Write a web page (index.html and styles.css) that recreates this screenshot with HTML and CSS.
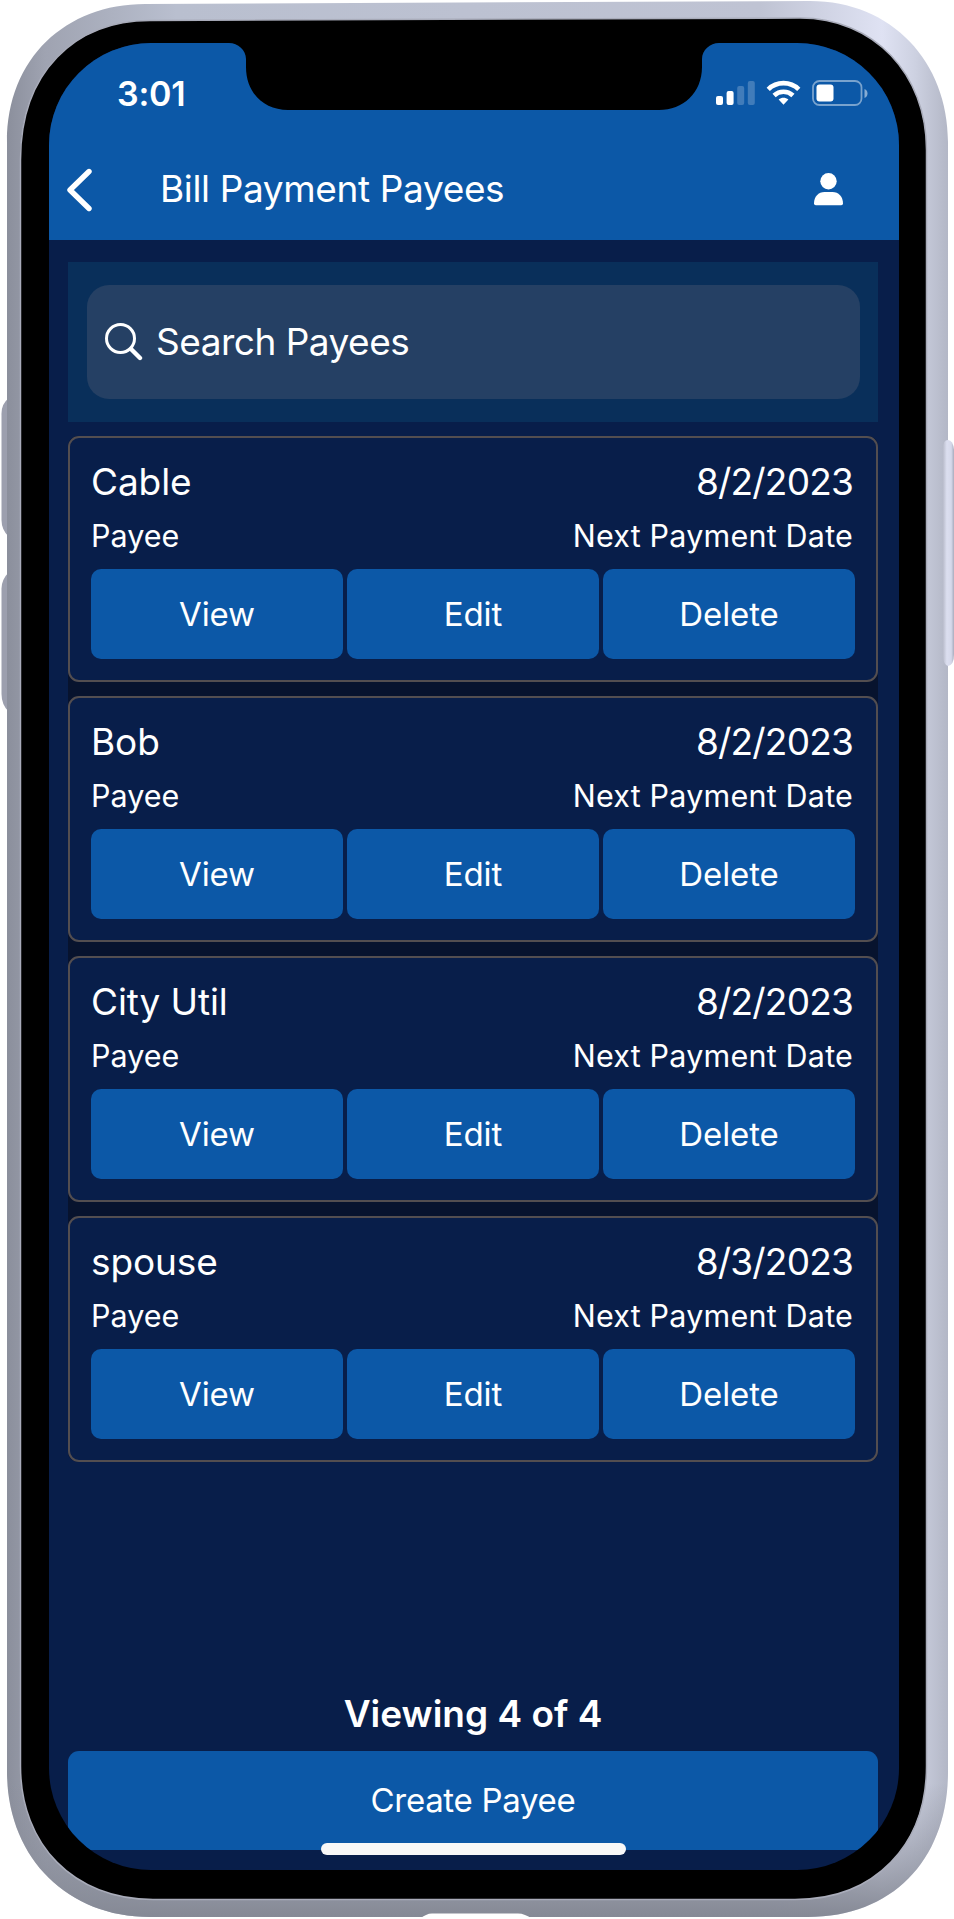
FILE: index.html
```
<!DOCTYPE html>
<html lang="en">

<head>
    <meta charset="UTF-8">
    <meta name="viewport" content="width=device-width, initial-scale=1.0">
    <link rel="stylesheet" href="styles.css">
    <title>Bill Payment Payees</title>
</head>

<body>
    <div class="phone">
        <!-- phone body -->
        <svg class="phoneFrame" viewBox="0 0 954 1919" aria-hidden="true">
            <defs>
                <linearGradient id="metal" x1="0" y1="0" x2="1" y2="0">
                    <stop offset="0" stop-color="#8b8f9c" />
                    <stop offset=".04" stop-color="#9fa3b1" />
                    <stop offset=".18" stop-color="#b9bfcf" />
                    <stop offset=".8" stop-color="#bfc3d3" />
                    <stop offset=".93" stop-color="#dfe2f3" />
                    <stop offset=".965" stop-color="#cdd1e1" />
                    <stop offset="1" stop-color="#b3b7c6" />
                </linearGradient>
                <linearGradient id="shade" x1="0" y1="0" x2="0" y2="1">
                    <stop offset="0" stop-color="#858995" stop-opacity="0" />
                    <stop offset=".93" stop-color="#858995" stop-opacity="0" />
                    <stop offset="1" stop-color="#858995" />
                </linearGradient>
                <linearGradient id="rightKey" x1="0" y1="0" x2="1" y2="0">
                    <stop offset="0" stop-color="#b9bccb" />
                    <stop offset=".35" stop-color="#dcdff0" />
                    <stop offset=".75" stop-color="#d5d8ea" />
                    <stop offset="1" stop-color="#a9acbd" />
                </linearGradient>
            </defs>
            <path d="M9 398Q1 404 1.500 415V520Q1.500 530 9 537ZM9 572Q1 580 1.500 590V694Q1.500 705 9 712Z" fill="#9c9fae" />
            <path d="M7 142C7 58 66 4 145 4L810 1C892 1 948 62 948 142V1772C948 1858 894 1917 808 1917H150C66 1917 7 1856 7 1772Z" fill="url(#metal)" />
            <path d="M7 142C7 58 66 4 145 4L810 1C892 1 948 62 948 142V1772C948 1858 894 1917 808 1917H150C66 1917 7 1856 7 1772Z" fill="url(#shade)" />
            <path d="M943 448Q943 440 948 440T954 450V654Q954 665 948 666Q943 664 943 656Z" fill="url(#rightKey)" />
            <path d="M20.500 160C20.500 72 75 20.500 150 20.500L800 18C874 18 926.500 74 926.500 150V1766C926.500 1845 875 1899.500 795 1899.500H153C74 1899.500 20.500 1845 20.500 1766Z" fill="#000" stroke="#a9acba" stroke-width="1.500" />
            <path d="M420 1919Q426 1913.500 432 1913.500H518Q525 1913.500 532 1919Z" fill="#fff" />
        </svg>

        <div class="screen">
            <svg class="notch" width="490" height="68" viewBox="0 0 490 68" aria-hidden="true">
                <path d="M0 0C9 0 17 7 17 16V24C17 50 35 67 59 67H430C454 67 473 50 473 24V16C473 7 481 0 490 0Z" />
            </svg>

            <div class="statusBar">
                <span class="time">3:01</span>
                <div class="statusIcons">
                    <svg width="39" height="26" viewBox="0 0 39 26" fill="#fff">
                        <rect x="0" y="16" width="7" height="9" rx="2" />
                        <rect x="10.600" y="11" width="7" height="14" rx="2" />
                        <rect x="21.200" y="6" width="7" height="19" rx="2" opacity=".22" />
                        <rect x="31.800" y="1" width="7" height="24" rx="2" opacity=".22" />
                    </svg>
                    <svg width="35" height="26" viewBox="0 0 36 26" fill="none" stroke="#fff" stroke-width="4.800">
                        <path d="M2.300 9.300C11 .8 25 .8 33.700 9.300" />
                        <path d="M8.300 15.500C13.800 10.400 22.200 10.400 27.700 15.500" />
                        <path d="M13 19.800C16 17.200 20 17.200 23 19.800L18 25Z" fill="#fff" stroke="none" />
                    </svg>
                    <svg width="56" height="26" viewBox="0 0 56 26">
                        <rect x="1" y="1" width="48.500" height="24" rx="6.500" fill="none" stroke="#fff" stroke-width="1.800" opacity=".45" />
                        <rect x="4.500" y="4.500" width="17" height="17" rx="3" fill="#fff" />
                        <path d="M52.500 9C56.500 10.500 56.500 16.500 52.500 18Z" fill="#fff" opacity=".5" />
                    </svg>
                </div>
            </div>

            <div class="navBar">
                <svg class="back" width="27" height="44" viewBox="0 0 27 44">
                    <path d="M23 3.500L4 22L23 40.500" fill="none" stroke="#fff" stroke-width="5.400" stroke-linecap="round" stroke-linejoin="round" />
                </svg>
                <div class="title">Bill Payment Payees</div>
                <svg class="user" width="29" height="33" viewBox="0 0 29 33" fill="#fff">
                    <circle cx="14.500" cy="8.300" r="8.200" />
                    <path d="M0 30.500C0 23.500 4.500 19 10.500 19H18.500C24.500 19 29 23.500 29 30.500Q29 32.300 27.200 32.300H1.800Q0 32.300 0 30.500Z" />
                </svg>
            </div>

            <div class="content">
                <div class="searchPanel">
                    <div class="searchBox">
                        <svg width="38" height="38" viewBox="0 0 38 38" fill="none" stroke="#fff" stroke-linecap="round">
                            <circle cx="15.500" cy="15.500" r="14" stroke-width="3" />
                            <path d="M26 26L35 35" stroke-width="4.400" />
                        </svg>
                        <span>Search Payees</span>
                    </div>
                </div>

                <div class="payeeList">
                    <div class="payee">
                        <div class="row main"><span>Cable</span><span class="date">8/2/2023</span></div>
                        <div class="row sub"><span>Payee</span><span class="next">Next Payment Date</span></div>
                        <div class="actions">
                            <button>View</button>
                            <button>Edit</button>
                            <button>Delete</button>
                        </div>
                    </div>
                    <div class="payee">
                        <div class="row main"><span>Bob</span><span class="date">8/2/2023</span></div>
                        <div class="row sub"><span>Payee</span><span class="next">Next Payment Date</span></div>
                        <div class="actions">
                            <button>View</button>
                            <button>Edit</button>
                            <button>Delete</button>
                        </div>
                    </div>
                    <div class="payee">
                        <div class="row main"><span>City Util</span><span class="date">8/2/2023</span></div>
                        <div class="row sub"><span>Payee</span><span class="next">Next Payment Date</span></div>
                        <div class="actions">
                            <button>View</button>
                            <button>Edit</button>
                            <button>Delete</button>
                        </div>
                    </div>
                    <div class="payee">
                        <div class="row main"><span>spouse</span><span class="date">8/3/2023</span></div>
                        <div class="row sub"><span>Payee</span><span class="next">Next Payment Date</span></div>
                        <div class="actions">
                            <button>View</button>
                            <button>Edit</button>
                            <button>Delete</button>
                        </div>
                    </div>
                </div>

                <div class="footer">
                    <div class="count">Viewing 4 of 4</div>
                    <button class="create">Create Payee</button>
                </div>
            </div>
            <div class="homeIndicator"></div>
        </div>
    </div>
</body>

</html>
```
FILE: styles.css
```
* {
    box-sizing: border-box;
}

body {
    margin: 0;
    background-color: #fff;
    font-family: Inter, "Liberation Sans", sans-serif;
    color: #fff;
}

.phone {
    position: relative;
    width: 954px;
    height: 1919px;
    padding: 43px 55px 49px 49px;
    overflow: hidden;
}

.phoneFrame {
    position: absolute;
    left: 0;
    top: 0;
    width: 954px;
    height: 1919px;
}

.screen {
    position: relative;
    display: flex;
    flex-direction: column;
    width: 850px;
    height: 1827px;
    background-color: #081e4a;
    border-radius: 102px;
    overflow: hidden;
}

.notch {
    position: absolute;
    left: 180px;
    top: 0;
}

/* header */
.statusBar {
    display: flex;
    justify-content: space-between;
    align-items: center;
    height: 100px;
    padding: 0 31px 0 68px;
    background-color: #0c58a7;
}

.time {
    font-size: 34px;
    font-weight: 600;
    letter-spacing: -0.2px;
}

.statusIcons {
    display: flex;
    gap: 11px;
}

.navBar {
    display: flex;
    align-items: center;
    height: 97px;
    padding: 0 56px 4px 17px;
    background-color: #0c58a7;
}

.title {
    flex: 1;
    margin-left: 67px;
    padding-bottom: 2px;
    font-size: 37px;
    letter-spacing: -0.36px;
    white-space: nowrap;
}

/* content */
.content {
    display: flex;
    flex-direction: column;
    flex: 1;
    padding: 22px 21px 20px 19px;
}

.searchPanel {
    height: 160px;
    padding: 23px 18px 23px 19px;
    background-color: #092f5a;
}

.searchBox {
    display: flex;
    align-items: center;
    height: 114px;
    padding: 0 0 1px 18px;
    background-color: #254064;
    border-radius: 22px;
    font-size: 37px;
    letter-spacing: -0.5px;
}

.searchBox span {
    margin-left: 13px;
}

.payeeList {
    display: flex;
    flex-direction: column;
    gap: 14px;
    margin-top: 14px;
    background-color: #07132e;
    border-radius: 10px;
}

.payee {
    height: 246px;
    padding: 18px 21px;
    background-color: #081e4a;
    border: 2px solid #534e50;
    border-radius: 11px;
}

.row {
    display: flex;
    justify-content: space-between;
    padding-right: 2px;
    white-space: nowrap;
}

.main {
    height: 51px;
    line-height: 51px;
    font-size: 37px;
    letter-spacing: -0.1px;
}

.date {
    letter-spacing: -0.8px;
}

.sub {
    height: 62px;
    line-height: 58px;
    font-size: 30.5px;
}

.next {
    letter-spacing: 0.2px;
}

.actions {
    display: grid;
    grid-template-columns: repeat(3, 1fr);
    gap: 4px;
}

button {
    height: 90px;
    padding: 0;
    border: none;
    border-radius: 10px;
    background-color: #0c58a7;
    color: #fff;
    font-family: inherit;
    font-size: 33px;
    letter-spacing: -0.1px;
}

.footer {
    margin-top: auto;
}

.count {
    height: 72px;
    line-height: 70px;
    font-size: 37px;
    font-weight: 600;
    text-align: center;
}

.create {
    display: block;
    width: 100%;
    height: 99px;
    padding-bottom: 2px;
    border-radius: 11px 11px 0 0;
    letter-spacing: -0.3px;
}

.homeIndicator {
    position: absolute;
    left: 272px;
    bottom: 15px;
    width: 305px;
    height: 12px;
    border-radius: 6px;
    background-color: #f8f8f8;
}
```
